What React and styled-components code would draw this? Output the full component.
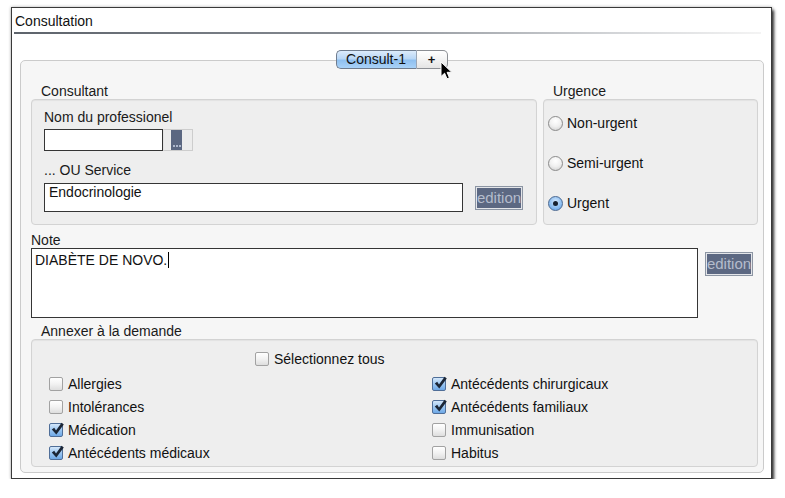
import React from "react";
import styled, { createGlobalStyle, css } from "styled-components";

const GlobalStyle = createGlobalStyle`
  html, body { margin: 0; padding: 0; background: #ffffff; }
  body {
    font-family: "Liberation Sans", Arial, Helvetica, sans-serif;
    font-size: 14px;
    color: #111;
  }
  * { box-sizing: border-box; }
`;

const Page = styled.div`
  padding: 7px 0 0 11px;
`;

const Window = styled.div`
  width: 761px;
  background: #ffffff;
  border: 1px solid #3a3a3a;
  box-shadow: 2px 3px 3px rgba(0, 0, 0, 0.8), 0 0 3px rgba(0, 0, 0, 0.3);
  padding-bottom: 5px;
`;

const TitleBar = styled.div`
  margin: 0 10px 0 2px;
  padding: 5px 0 2px 1px;
  font-size: 14px;
  line-height: 17px;
  color: #111;
  border-bottom: 2px solid #6a6f76;
  border-image: linear-gradient(90deg, #5d636b 0%, #868b92 45%, #d2d4d7 80%, #f4f4f4 100%) 1;
`;

const TabBar = styled.div`
  display: flex;
  justify-content: center;
  margin: 16px 0 -9px;
  position: relative;
  z-index: 1;
`;

const TabGroup = styled.div`
  display: flex;
  position: relative;
`;

const Tab = styled.div`
  height: 19px;
  width: ${(p) => p.$width}px;
  border: 1px solid #6f7c8e;
  font-size: 14px;
  line-height: 17px;
  text-align: center;
  color: #111;
  ${(p) =>
    p.$active
      ? css`
          background: linear-gradient(180deg, #dcebfb 0%, #b9d7f6 45%, #8fc0f0 55%, #a9d2f8 100%);
          border-radius: 5px 0 0 5px;
          border-right-color: #9aa6b6;
        `
      : css`
          background: linear-gradient(180deg, #ffffff 0%, #f3f3f3 50%, #e4e4e4 100%);
          border-left: none;
          border-color: #8c8f94;
          border-radius: 0 5px 5px 0;
          font-weight: bold;
          font-size: 13px;
        `}
`;

const Cursor = styled.svg`
  position: absolute;
  left: 104px;
  top: 11px;
  width: 13px;
  height: 20px;
  overflow: visible;
`;

const Panel = styled.div`
  margin: 0 7px 0 8px;
  background: #f6f6f6;
  border: 1px solid #cbcbcb;
  border-radius: 5px;
  padding: 22px 5px 5px 10px;
`;

const TopRow = styled.div`
  display: grid;
  grid-template-columns: 506px 215px;
  gap: 6px;
`;

const Column = styled.div`
  display: flex;
  flex-direction: column;
`;

const GroupLabel = styled.div`
  padding-left: ${(p) => (p.$flush ? 0 : 10)}px;
  margin-top: ${(p) => p.$top || 0}px;
  line-height: 16px;
  color: #1a1a1a;
`;

const GroupBox = styled.div`
  flex: 1;
  background: #eeeeee;
  border: 1px solid #d3d3d3;
  border-radius: 4px;
  box-shadow: inset 0 1px 1px rgba(0, 0, 0, 0.05);
`;

const ConsultantBox = styled(GroupBox)`
  padding: 9px 12px 12px;
`;

const UrgenceBox = styled(GroupBox)`
  padding: 3px 0 0 4px;
`;

const FieldLabel = styled.div`
  line-height: 16px;
  margin-top: ${(p) => p.$top || 0}px;
  color: #1a1a1a;
`;

const InputRow = styled.div`
  display: flex;
  align-items: center;
  margin-top: ${(p) => p.$top || 0}px;
`;

const TextInput = styled.textarea`
  display: block;
  width: ${(p) => p.$width}px;
  height: ${(p) => p.$height}px;
  border: 1px solid #353535;
  background: #ffffff;
  padding: 0 4px;
  margin: 0;
  font-family: "Liberation Sans", Arial, Helvetica, sans-serif;
  font-size: 14px;
  line-height: 16px;
  color: #111;
  resize: none;
  overflow: hidden;
  outline: none;
  border-radius: 0;
`;

const BrowseButton = styled.button`
  width: 30px;
  height: 22px;
  padding: 0 0 0 7px;
  margin: 0;
  border: 1px solid #cdcdcd;
  border-left-color: #e4e4e4;
  background: #ececec;
  display: flex;
  align-items: stretch;
`;

const BrowseFace = styled.span`
  width: 11px;
  background: #5b6781;
  display: flex;
  align-items: flex-end;
  justify-content: center;
  gap: 1px;
  padding-bottom: 3px;
`;

const Dot = styled.span`
  width: 2px;
  height: 2px;
  background: #aeb8cc;
`;

const EditionButton = styled.button`
  width: 48px;
  height: 24px;
  margin: 0 0 0 ${(p) => p.$left || 0}px;
  margin-top: ${(p) => p.$top || 0}px;
  padding: 0;
  border: 1px solid #8c95a3;
  box-shadow: inset 0 0 0 1px #e3e5e9;
  background: #5c6882;
  color: #b4bccc;
  font-family: "Liberation Sans", Arial, Helvetica, sans-serif;
  font-size: 15px;
  line-height: 20px;
  text-align: center;
  border-radius: 0;
`;

const RadioRow = styled.label`
  height: 40px;
  display: flex;
  align-items: center;
  gap: 4px;
  color: #111;
`;

const RadioDot = styled.span`
  width: 15px;
  height: 15px;
  border-radius: 50%;
  display: flex;
  align-items: center;
  justify-content: center;
  ${(p) =>
    p.$checked
      ? css`
          border: 1px solid #4a6891;
          background: radial-gradient(circle at 50% 35%, #d3e7fb 0%, #8fbff0 55%, #5f9ee3 100%);
          &::after {
            content: "";
            width: 5px;
            height: 5px;
            border-radius: 50%;
            background: #17212e;
          }
        `
      : css`
          border: 1px solid #8b8b8b;
          background: radial-gradient(circle at 50% 30%, #ffffff 0%, #f0f0f0 50%, #cbcbcb 100%);
        `}
`;

const NoteRow = styled.div`
  display: flex;
  align-items: flex-start;
  gap: 7px;
`;

const NoteField = styled.div`
  width: 667px;
  height: 70px;
  border: 1px solid #353535;
  background: #ffffff;
  padding: 3px 3px;
  line-height: 16px;
  color: #111;
`;

const Caret = styled.span`
  display: inline-block;
  width: 1px;
  height: 16px;
  background: #000;
  vertical-align: -3px;
  margin-left: 1px;
`;

const AnnexBox = styled(GroupBox)`
  padding: 7px 0 2px 17px;
  display: flex;
  flex-direction: column;
`;

const SelectAllRow = styled.label`
  height: 23px;
  margin-bottom: 2px;
  padding-left: 206px;
  display: flex;
  align-items: center;
  gap: 5px;
`;

const CheckGrid = styled.div`
  display: grid;
  grid-template-columns: 383px 1fr;
  grid-template-rows: repeat(4, 23px);
  grid-auto-flow: column;
`;

const CheckRow = styled.label`
  display: flex;
  align-items: center;
  gap: 5px;
  color: #111;
`;

const CheckBox = styled.span`
  position: relative;
  width: 14px;
  height: 14px;
  border-radius: 2px;
  flex: none;
  ${(p) =>
    p.$checked
      ? css`
          border: 1px solid #4f6e98;
          background: linear-gradient(180deg, #d4e7fa 0%, #9cc7f2 50%, #6ea8e6 100%);
        `
      : css`
          border: 1px solid #a2a2a2;
          background: linear-gradient(180deg, #ffffff 0%, #f2f2f2 50%, #dedede 100%);
        `}
`;

const CheckMark = styled.svg`
  position: absolute;
  left: 0;
  top: -2px;
  width: 14px;
  height: 14px;
  overflow: visible;
`;

function Check({ checked, label }) {
  return (
    <>
      <CheckBox $checked={checked}>
        {checked && (
          <CheckMark viewBox="0 0 14 14">
            <path d="M1.8 7.6 L4.2 5.8 L6 8.6 L11.6 0.8 L13.8 2.4 L6.3 12.6 Z" fill="#1b2636" />
          </CheckMark>
        )}
      </CheckBox>
      <span>{label}</span>
    </>
  );
}

const leftItems = [
  { label: "Allergies", checked: false },
  { label: "Intolérances", checked: false },
  { label: "Médication", checked: true },
  { label: "Antécédents médicaux", checked: true },
];
const rightItems = [
  { label: "Antécédents chirurgicaux", checked: true },
  { label: "Antécédents familiaux", checked: true },
  { label: "Immunisation", checked: false },
  { label: "Habitus", checked: false },
];

const urgences = [
  { label: "Non-urgent", checked: false },
  { label: "Semi-urgent", checked: false },
  { label: "Urgent", checked: true },
];

export default function App() {
  return (
    <>
      <GlobalStyle />
      <Page>
        <Window>
          <TitleBar>Consultation</TitleBar>
          <TabBar>
            <TabGroup>
              <Tab $active $width={81}>Consult-1</Tab>
              <Tab $width={31}>+</Tab>
              <Cursor viewBox="0 0 13 20">
                <path
                  d="M1 1 L1 15.5 L4.6 12.2 L7 17.8 L9.4 16.8 L7.1 11.3 L11.8 11.3 Z"
                  fill="#000"
                  stroke="#fff"
                  strokeWidth="1"
                  strokeLinejoin="round"
                />
              </Cursor>
            </TabGroup>
          </TabBar>
          <Panel>
            <TopRow>
              <Column>
                <GroupLabel>Consultant</GroupLabel>
                <ConsultantBox>
                  <FieldLabel>Nom du professionel</FieldLabel>
                  <InputRow $top={4}>
                    <TextInput $width={119} $height={22} readOnly value="" />
                    <BrowseButton aria-label="...">
                      <BrowseFace>
                        <Dot />
                        <Dot />
                        <Dot />
                      </BrowseFace>
                    </BrowseButton>
                  </InputRow>
                  <FieldLabel $top={11}>... OU Service</FieldLabel>
                  <InputRow $top={5}>
                    <TextInput $width={419} $height={29} readOnly value="Endocrinologie" />
                    <EditionButton $left={12}>edition</EditionButton>
                  </InputRow>
                </ConsultantBox>
              </Column>
              <Column>
                <GroupLabel>Urgence</GroupLabel>
                <UrgenceBox>
                  {urgences.map((u) => (
                    <RadioRow key={u.label}>
                      <RadioDot $checked={u.checked} />
                      <span>{u.label}</span>
                    </RadioRow>
                  ))}
                </UrgenceBox>
              </Column>
            </TopRow>

            <GroupLabel $flush $top={7}>Note</GroupLabel>
            <NoteRow>
              <NoteField>
                DIABÈTE DE NOVO.<Caret />
              </NoteField>
              <EditionButton $top={4}>edition</EditionButton>
            </NoteRow>

            <GroupLabel $top={5}>Annexer à la demande</GroupLabel>
            <AnnexBox>
              <SelectAllRow>
                <Check checked={false} label="Sélectionnez tous" />
              </SelectAllRow>
              <CheckGrid>
                {[...leftItems, ...rightItems].map((it) => (
                  <CheckRow key={it.label}>
                    <Check checked={it.checked} label={it.label} />
                  </CheckRow>
                ))}
              </CheckGrid>
            </AnnexBox>
          </Panel>
        </Window>
      </Page>
    </>
  );
}
